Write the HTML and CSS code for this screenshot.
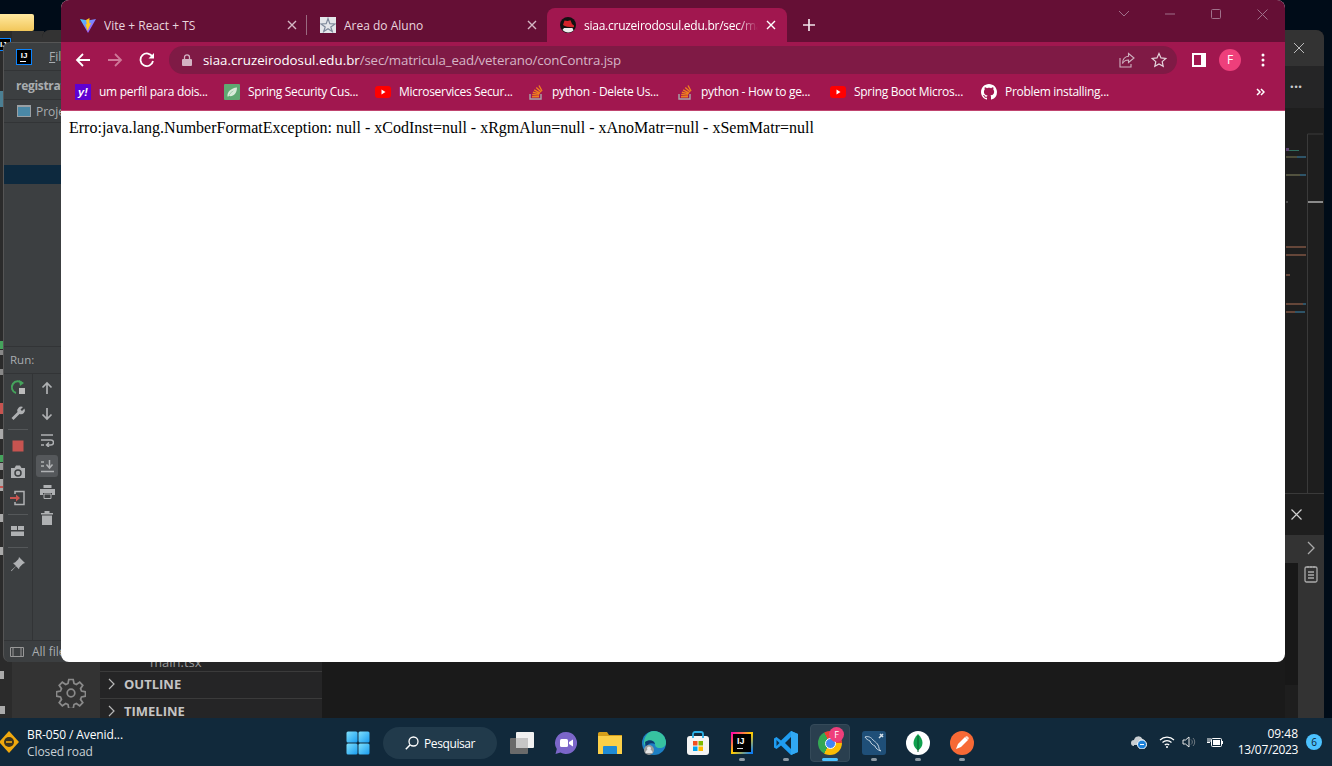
FILE: index.html
```html
<!DOCTYPE html>
<html lang="pt-BR">
<head>
<meta charset="utf-8">
<title>Desktop</title>
<link rel="stylesheet" href="styles.css">
</head>
<body>
<svg class="defs" width="0" height="0" aria-hidden="true">
  <symbol id="yt" viewBox="0 0 16 16"><rect x="0" y="2" width="16" height="12" rx="3" fill="#f00"/><path d="M6.500 5.500v5l4-2.500z" fill="#fff"/></symbol>
  <symbol id="so" viewBox="0 0 16 16"><path d="M2 10v5h11v-5" fill="none" stroke="#a8a8ab" stroke-width="1.400"/><path d="M4 12.700h7M4.200 10.500l6.800.6M4.900 8.200l6.600 1.700M6.200 5.800l5.900 3.300M8.300 3.400l4.900 4.700M11 1.500l3 5.500" fill="none" stroke="#f0801d" stroke-width="1.400"/></symbol>
</svg>
<div class="desktop">
  <div class="folder-tab"></div>

  <!-- back IntelliJ window -->
  <div class="win back-ij">
    <div class="ij-mini">IJ</div>
    <svg class="back-strip" width="5" height="666" viewBox="0 0 5 666">
      <rect y="40" width="3" height="16" fill="#4b7f93"/><rect y="290" width="3" height="8" fill="#45a35c"/><rect y="299" width="3" height="5" fill="#888"/><rect y="318" width="3" height="6" fill="#888"/><rect y="352" width="3" height="11" fill="#c75450"/><rect y="378" width="3" height="10" fill="#aaa"/><rect y="404" width="3" height="7" fill="#45a35c"/><rect y="412" width="3" height="7" fill="#999"/><rect y="428" width="3" height="12" fill="#aaa"/><rect y="435" width="3" height="2" fill="#c75450"/><rect y="463" width="3" height="8" fill="#aaa"/><rect y="496" width="3" height="8" fill="#aaa"/><rect y="620" width="4" height="8" fill="#aaa"/><rect y="655" width="5" height="8" fill="#aaa"/>
    </svg>
  </div>

  <!-- VS Code window -->
  <div class="win vscode">
    <div class="vs-title"><svg class="vs-x" width="12" height="12" viewBox="0 0 12 12"><path d="M1 1l10 10M11 1L1 11" stroke="#bbb" fill="none"/></svg></div>
    <div class="vs-main">
      <div class="vs-activity">
        <svg class="gear" width="30" height="30" viewBox="0 0 30 30" fill="none" stroke="#8a8a8a" stroke-width="1.700"><path d="M12.800 1.500h4.400l.8 4 2.300 1 3.400-2.300 3.100 3.100-2.300 3.400 1 2.300 4 .8v4.400l-4 .8-1 2.300 2.300 3.400-3.100 3.100-3.400-2.300-2.300 1-.8 4h-4.400l-.8-4-2.300-1-3.400 2.300-3.100-3.100 2.300-3.400-1-2.300-4-.8v-4.400l4-.8 1-2.300-2.300-3.400 3.100-3.100 3.400 2.300 2.300-1z"/><circle cx="15" cy="15" r="3.800"/></svg>
      </div>
      <div class="vs-side">
        <div class="vs-filler"></div>
        <div class="vs-file">main.tsx</div>
        <div class="vs-section"><svg width="8" height="12" viewBox="0 0 8 12"><path d="M1 1l5 5-5 5" fill="none" stroke="#b8b8b8" stroke-width="1.200"/></svg><span>OUTLINE</span></div>
        <div class="vs-section"><svg width="8" height="12" viewBox="0 0 8 12"><path d="M1 1l5 5-5 5" fill="none" stroke="#b8b8b8" stroke-width="1.200"/></svg><span>TIMELINE</span></div>
      </div>
      <div class="vs-editor">
        <div class="vs-tabs-right"><span class="vs-dots">•••</span></div>
        <div class="vs-code-right">
          <svg class="minimap" width="39" height="386" viewBox="0 0 39 386">
            <rect x="0" y="0" width="39" height="386" fill="#1e1e1e"/>
            <path d="M22.500 26V386" stroke="#3a3a3a"/><path d="M22.500 26H38" stroke="#3a3a3a"/>
            <rect x="23" y="93" width="15" height="2" fill="#8a8a8a"/>
            <rect x="1" y="40" width="3" height="3" fill="#5c4470"/><rect x="4" y="42" width="10" height="1" fill="#2f6e60"/>
            <rect x="1" y="48" width="11" height="2" fill="#4c4c38"/><rect x="12" y="48" width="9" height="2" fill="#2e5468"/>
            <rect x="1" y="66" width="14" height="2" fill="#52523f"/><rect x="15" y="66" width="6" height="2" fill="#2e5468"/>
            <rect x="1" y="93" width="2" height="2" fill="#4a4a4a"/>
            <rect x="1" y="138" width="20" height="2" fill="#654639"/><rect x="1" y="146" width="20" height="2" fill="#654639"/>
            <rect x="1" y="166" width="4" height="2" fill="#654639"/>
            <rect x="1" y="195" width="17" height="2" fill="#654639"/><rect x="18" y="195" width="3" height="2" fill="#2e5468"/>
            <rect x="1" y="203" width="9" height="2" fill="#654639"/><rect x="10" y="203" width="10" height="2" fill="#2e5468"/>
            <path d="M0 385.500H39" stroke="#3a3a3a"/>
          </svg>
        </div>
        <div class="vs-panel-head"><svg width="11" height="11" viewBox="0 0 11 11"><path d="M.5.500l10 10M10.500.500l-10 10" stroke="#d0d0d0" fill="none" stroke-width="1.200"/></svg></div>
        <div class="vs-panel">
          <div class="vs-panel-left"></div>
          <div class="vs-panel-rail">
            <svg width="8" height="14" viewBox="0 0 8 14"><path d="M1 1l6 6-6 6" fill="none" stroke="#aaa" stroke-width="1.300"/></svg>
            <svg width="14" height="18" viewBox="0 0 14 18" fill="none" stroke="#aaa" stroke-width="1.300"><rect x="1" y="2" width="12" height="15" rx="1.500"/><path d="M4 1v2M7 1v2M10 1v2M4 7h6M4 10h6M4 13h6"/></svg>
          </div>
        </div>
      </div>
    </div>
  </div>

  <!-- front IntelliJ window -->
  <div class="win ij">
    <div class="ij-menu">
      <div class="ij-logo"><span>IJ</span><i></i></div>
      <span class="ij-file"><u>F</u>il</span>
    </div>
    <div class="ij-proj">registrat</div>
    <div class="ij-tool"><span class="ij-box"></span><span>Proje</span></div>
    <div class="ij-tree"><div class="ij-sel"></div></div>
    <div class="ij-run-head"><span>Run:</span><span class="ij-box small"></span></div>
    <div class="ij-run">
      <div class="ij-col1">
        <svg width="16" height="16" viewBox="0 0 16 16"><path d="M12.500 4.500A6 6 0 1 0 6 14" fill="none" stroke="#45a35c" stroke-width="2"/><path d="M9 1l5 3-4 3z" fill="#45a35c"/><rect x="9" y="9" width="6" height="6" fill="#bbb"/></svg>
        <svg width="16" height="16" viewBox="0 0 16 16"><path d="M1.500 13l6-6A4 4 0 0 1 13 2l-2.500 2.500 1.500 1.500L14.500 3.500A4 4 0 0 1 9.500 9l-6 6z" fill="#afb1b3"/></svg>
        <b class="sep"></b>
        <svg class="small-ic" width="12" height="12" viewBox="0 0 12 12"><rect width="11" height="11" x=".5" y=".5" fill="#c75450"/></svg>
        <svg width="16" height="16" viewBox="0 0 16 16"><path d="M1 4h3.500L6 1.500h4L11.500 4H15v10H1z" fill="#afb1b3"/><circle cx="8" cy="9" r="3" fill="none" stroke="#3c3f41" stroke-width="1.500"/></svg>
        <svg width="16" height="16" viewBox="0 0 16 16"><path d="M5 4V1.500h9v13H5V12" fill="none" stroke="#afb1b3" stroke-width="1.500"/><path d="M0 7h6V4.500L10 8l-4 3.500V9H0z" fill="#c75450"/></svg>
        <b class="sep"></b>
        <svg class="small-ic" width="14" height="12" viewBox="0 0 14 12"><path d="M0 1h6v4H0zM7 1h6v4H7zM0 6.500h13V11H0z" fill="#afb1b3"/></svg>
        <b class="sep"></b>
        <svg width="16" height="16" viewBox="0 0 16 16"><path d="M9 1l6 6-2 .7-3.500 3.500-.5 2-3-3-4.500 5L1 14.500l5-4.500-3-3 2-.5L8.500 3z" fill="#afb1b3"/></svg>
      </div>
      <div class="ij-col2">
        <svg width="14" height="14" viewBox="0 0 14 14"><path d="M7 13V2M2.500 6.500L7 2l4.500 4.500" fill="none" stroke="#afb1b3" stroke-width="1.700"/></svg>
        <svg width="14" height="14" viewBox="0 0 14 14"><path d="M7 1v11M2.500 7.500L7 12l4.500-4.500" fill="none" stroke="#afb1b3" stroke-width="1.700"/></svg>
        <svg width="14" height="14" viewBox="0 0 14 14"><path d="M1 2h12M1 7h10a2 2 0 0 1 0 5H7M9 9.500L6.500 12 9 14M1 12h3" fill="none" stroke="#afb1b3" stroke-width="1.500"/></svg>
        <span class="ij-active"><svg width="14" height="14" viewBox="0 0 14 14"><path d="M1 3h3M1 7h3M1 12.500h13M9.500 1v7M6.500 5.500L9.500 9l3-3.500" fill="none" stroke="#afb1b3" stroke-width="1.500"/></svg></span>
        <svg width="15" height="14" viewBox="0 0 15 14"><path d="M3.500 0h8v3h-8zM0 4h15v6h-3V8H3v2H0z" fill="#afb1b3"/><path d="M4 9h7v4.500H4z" fill="none" stroke="#afb1b3"/></svg>
        <svg width="12" height="14" viewBox="0 0 12 14"><path d="M0 2h3.500V0h5v2H12v1.500H0zM1 4.500h10V14H1z" fill="#afb1b3"/></svg>
      </div>
    </div>
    <div class="ij-status"><svg width="14" height="10" viewBox="0 0 14 10"><path d="M.5.500h13v9H.5zM3 .5v9M11 .5v9" fill="none" stroke="#999"/></svg><span>All file</span></div>
  </div>

  <!-- Chrome window -->
  <div class="win chrome">
    <div class="ch-tabs">
      <div class="tab">
        <svg class="fav" viewBox="0 0 16 16"><defs><linearGradient id="vg" x1="0" y1="0" x2="1" y2="1"><stop offset="0" stop-color="#41d1ff"/><stop offset="1" stop-color="#bd34fe"/></linearGradient></defs><path d="M0 2l8 1.400L16 2 8 16z" fill="url(#vg)"/><path d="M9.500 1L6 3l.8 4-1.300.5L7.500 14l3.500-8-1.700.3z" fill="#ffc91f"/></svg>
        <span class="tab-title">Vite + React + TS</span>
        <svg class="tab-x" viewBox="0 0 10 10"><path d="M1 1l8 8M9 1L1 9" stroke="#d4b8c4" stroke-width="1.400" fill="none"/></svg>
        <i class="tab-sep"></i>
      </div>
      <div class="tab">
        <svg class="fav" viewBox="0 0 16 16"><rect width="16" height="16" fill="#e4e6ea"/><path d="M8 1.500l1.800 5.200 5.200.3-4.200 2.900 1.500 4.600L8 11.700l-4.300 2.800 1.500-4.600L1 7l5.200-.3z" fill="none" stroke="#7f8a9c" stroke-width="1.200"/></svg>
        <span class="tab-title">Area do Aluno</span>
        <svg class="tab-x" viewBox="0 0 10 10"><path d="M1 1l8 8M9 1L1 9" stroke="#d4b8c4" stroke-width="1.400" fill="none"/></svg>
      </div>
      <div class="tab active">
        <svg class="fav" viewBox="0 0 16 16"><circle cx="8" cy="8" r="8" fill="#111"/><path d="M2.500 13A8 8 0 0 0 13.500 13.500L12.500 11H4z" fill="#eee"/><path d="M3 8l1.500-4.500 3 .5 3-.8L12 7l2 1.500c.5 1.500-.5 2-2 1.800C9 10.200 5 9.500 3 8z" fill="#d3232a"/></svg>
        <span class="tab-title fade">siaa.cruzeirodosul.edu.br/sec/matricula_ead/veterano/conContra.jsp</span>
        <svg class="tab-x" viewBox="0 0 10 10"><path d="M1 1l8 8M9 1L1 9" stroke="#fff" stroke-width="1.400" fill="none"/></svg>
      </div>
      <svg class="tab-plus" width="12" height="12" viewBox="0 0 12 12"><path d="M6 0v12M0 6h12" stroke="#f1e3e9" stroke-width="1.700"/></svg>
      <div class="win-ctrls">
        <svg width="12" height="8" viewBox="0 0 12 8"><path d="M1 1l5 5 5-5" fill="none" stroke="#a0708a"/></svg>
        <svg width="10" height="2" viewBox="0 0 10 2"><path d="M0 1h10" stroke="#a0708a"/></svg>
        <svg width="10" height="10" viewBox="0 0 10 10"><rect x=".5" y=".5" width="9" height="9" rx="1" fill="none" stroke="#a0708a"/></svg>
        <svg width="11" height="11" viewBox="0 0 11 11"><path d="M.5.500l10 10M10.500.500l-10 10" fill="none" stroke="#a0708a"/></svg>
      </div>
    </div>

    <div class="ch-toolbar">
      <svg class="nav" width="16" height="16" viewBox="0 0 16 16"><path d="M15 8H2M8 2L2 8l6 6" fill="none" stroke="#fff" stroke-width="1.800"/></svg>
      <svg class="nav" width="16" height="16" viewBox="0 0 16 16"><path d="M1 8h13M8 2l6 6-6 6" fill="none" stroke="#cf7898" stroke-width="1.800"/></svg>
      <svg class="nav" width="16" height="16" viewBox="0 0 16 16"><path d="M13.500 5A6.300 6.300 0 1 0 14 9" fill="none" stroke="#fff" stroke-width="1.800"/><path d="M9.500 6.500H15V1z" fill="#fff"/></svg>
      <div class="omnibox">
        <svg class="lock" width="10" height="12" viewBox="0 0 10 12"><path d="M2.500 5V3.300a2.500 2.500 0 0 1 5 0V5" fill="none" stroke="#d3b3c3" stroke-width="1.300"/><rect y="5" width="10" height="7" rx="1" fill="#d3b3c3"/></svg>
        <span class="url"><b>siaa.cruzeirodosul.edu.br</b><span class="url-path">/sec/matricula_ead/veterano/conContra.jsp</span></span>
        <svg class="omni-i" width="16" height="16" viewBox="0 0 16 16"><path d="M9.500 1.500L15 6l-5.500 4.500V8C6 8 4.500 9.500 3.500 11.500 3.500 7.500 6 4.500 9.500 4.200zM1 6v9h11v-3" fill="none" stroke="#cfb2c0" stroke-width="1.100"/></svg>
        <svg class="omni-i" width="16" height="16" viewBox="0 0 16 16"><path d="M8 1.500l2 4.400 4.800.5-3.600 3.200 1 4.700L8 11.900l-4.200 2.400 1-4.700L1.200 6.400 6 5.900z" fill="none" stroke="#e6d5dd" stroke-width="1.200"/></svg>
      </div>
      <svg class="side-ic" width="14" height="14" viewBox="0 0 14 14"><path d="M0 0h14v14H0z" fill="#fff"/><rect x="2" y="2" width="7" height="10" fill="#a1174f"/></svg>
      <div class="avatar">F</div>
      <svg class="kebab" width="4" height="14" viewBox="0 0 4 14"><circle cx="2" cy="2" r="1.500" fill="#fff"/><circle cx="2" cy="7" r="1.500" fill="#fff"/><circle cx="2" cy="12" r="1.500" fill="#fff"/></svg>
    </div>

    <div class="ch-bookmarks">
      <div class="bm"><span class="bm-yahoo">y!</span><span>um perfil para dois...</span></div>
      <div class="bm"><svg class="fav" viewBox="0 0 16 16"><rect width="16" height="16" rx="1" fill="#5fa872"/><path d="M3.500 12.500C3 8 7 4 13 3.500 13 9 9.500 13 5 12c1-2.500 3-4.500 5-5.500-2.500.8-4.500 3-5.500 6z" fill="#d8ead9"/></svg><span>Spring Security Cus...</span></div>
      <div class="bm"><svg class="fav"><use href="#yt"/></svg><span>Microservices Secur...</span></div>
      <div class="bm"><svg class="fav"><use href="#so"/></svg><span>python - Delete Us...</span></div>
      <div class="bm"><svg class="fav"><use href="#so"/></svg><span>python - How to ge...</span></div>
      <div class="bm"><svg class="fav"><use href="#yt"/></svg><span>Spring Boot Micros...</span></div>
      <div class="bm"><svg class="fav" viewBox="0 0 16 16"><path fill="#fff" d="M8 0C3.580 0 0 3.580 0 8c0 3.540 2.290 6.530 5.470 7.590.4.070.55-.17.55-.38 0-.19-.01-.82-.01-1.490-2.010.37-2.530-.49-2.690-.94-.09-.23-.48-.94-.82-1.130-.28-.15-.68-.52-.01-.53.63-.01 1.080.58 1.230.82.720 1.210 1.870.870 2.330.660.070-.52.280-.87.510-1.070-1.780-.2-3.640-.89-3.640-3.950 0-.87.310-1.590.820-2.150-.08-.2-.36-1.020.080-2.120 0 0 .670-.21 2.200.820.640-.18 1.320-.27 2-.27.680 0 1.360.090 2 .270 1.530-1.040 2.200-.82 2.200-.82.440 1.100.160 1.920.080 2.120.510.560.820 1.270.820 2.150 0 3.070-1.870 3.750-3.650 3.950.290.250.540.730.540 1.480 0 1.070-.01 1.930-.01 2.200 0 .210.150.460.550.380A8.013 8.013 0 0 0 16 8c0-4.420-3.580-8-8-8z"/></svg><span>Problem installing...</span></div>
      <svg class="bm-more" width="9" height="8" viewBox="0 0 9 8"><path d="M1 1l3 3-3 3M5 1l3 3-3 3" fill="none" stroke="#fff" stroke-width="1.500"/></svg>
    </div>

    <div class="ch-page">Erro:java.lang.NumberFormatException: null - xCodInst=null - xRgmAlun=null - xAnoMatr=null - xSemMatr=null</div>
  </div>

  <!-- taskbar -->
  <div class="taskbar">
    <div class="tb-weather">
      <svg width="22" height="24" viewBox="0 0 22 24"><path d="M9 1l10 11-10 11L-1 12z" fill="#f0a90e"/><circle cx="9" cy="12" r="5" fill="#3a3320"/><path d="M6 12h6" stroke="#f0a90e" stroke-width="1.600"/></svg>
      <div class="tb-wtext"><span>BR-050 / Avenid...</span><span class="dim">Closed road</span></div>
    </div>
    <div class="tb-center">
      <div class="tb-item"><svg width="24" height="24" viewBox="0 0 24 24"><defs><linearGradient id="wg" x1="0" y1="0" x2="1" y2="1"><stop offset="0" stop-color="#7fe0fc"/><stop offset="1" stop-color="#1a9df0"/></linearGradient></defs><rect x="0.500" y="0.500" width="11" height="11" rx="1.500" fill="url(#wg)"/><rect x="12.500" y="0.500" width="11" height="11" rx="1.500" fill="url(#wg)"/><rect x="0.500" y="12.500" width="11" height="11" rx="1.500" fill="url(#wg)"/><rect x="12.500" y="12.500" width="11" height="11" rx="1.500" fill="url(#wg)"/></svg></div>
      <div class="tb-search"><svg width="14" height="14" viewBox="0 0 14 14"><circle cx="8.500" cy="5.500" r="4.500" fill="none" stroke="#fff" stroke-width="1.300"/><path d="M5.200 8.800L.8 13.200" stroke="#fff" stroke-width="1.500"/></svg><span>Pesquisar</span></div>
      <div class="tb-item"><svg width="24" height="22" viewBox="0 0 24 22"><rect x="6" y="0" width="18" height="16" rx="1" fill="#f1f1f1"/><rect x="0" y="6" width="18" height="16" rx="1" fill="#6a6a6a"/><rect x="6" y="6" width="12" height="10" fill="#c6c6c6"/></svg></div>
      <div class="tb-item"><svg width="24" height="24" viewBox="0 0 24 24"><path d="M12 1a11 11 0 1 1-5.500 20.500L1.500 23l1.300-5A11 11 0 0 1 12 1z" fill="#7b66c9"/><rect x="6" y="8" width="8" height="8" rx="1.500" fill="#fff"/><path d="M15 11l4-2.500v7L15 13z" fill="#fff"/></svg></div>
      <div class="tb-item"><svg width="24" height="22" viewBox="0 0 24 22"><path d="M0 1.500A1.500 1.500 0 0 1 1.500 0H9l2 3h13v3H0z" fill="#d69f1a"/><path d="M0 4h24v18H0z" fill="#fcd049"/><path d="M5 15a1 1 0 0 1 1-1h12a1 1 0 0 1 1 1v7H5z" fill="#1f8bd6"/></svg></div>
      <div class="tb-item edge"><svg width="24" height="24" viewBox="0 0 24 24"><circle cx="12" cy="12" r="12" fill="#1d7fc4"/><path d="M12 0a12 12 0 0 1 12 12c0 3-3 5-6 5-4 0-5-2-5-4 0-3-3-4-6-3-2 1-4 2-5 5C1 6 6 0 12 0z" fill="#37c2a0"/><path d="M3 11c4-3 9-2 10 2-4-2-8 0-9 4z" fill="#0d3a6e"/><circle cx="7" cy="19" r="5" fill="#9a9a9a"/><circle cx="7" cy="17.500" r="2" fill="#e5e5e5"/><path d="M3.500 22a3.500 3.500 0 0 1 7 0z" fill="#e5e5e5"/></svg></div>
      <div class="tb-item"><svg width="24" height="24" viewBox="0 0 24 24"><rect x="1" y="5" width="22" height="19" rx="3" fill="#f4f4f4"/><path d="M7 7V3a2 2 0 0 1 2-2h6a2 2 0 0 1 2 2v4" fill="none" stroke="#2ab1e8" stroke-width="1.800"/><rect x="7" y="10" width="4.500" height="4.500" fill="#f25022"/><rect x="12.500" y="10" width="4.500" height="4.500" fill="#7fba00"/><rect x="7" y="15.500" width="4.500" height="4.500" fill="#00a4ef"/><rect x="12.500" y="15.500" width="4.500" height="4.500" fill="#ffb900"/></svg></div>
      <div class="tb-item on"><div class="tb-ij"><span>IJ</span><i></i></div></div>
      <div class="tb-item on"><svg width="24" height="24" viewBox="0 0 24 24"><path d="M17 0l7 3v18l-7 3L7 14.500 2.500 18 0 16.500V7.500L2.500 6 7 9.500z" fill="#1f9cf0"/><path d="M2.500 9v6L5.500 12z" fill="#0d3350"/><path d="M17 0l7 3v18l-7 3z" fill="#31a8f3"/><path d="M17 6l-6 6 6 6z" fill="#12293a"/></svg></div>
      <div class="tb-item active">
        <div class="chrome-ic"><span class="chrome-in"></span></div>
        <span class="chrome-badge">F</span>
      </div>
      <div class="tb-item on"><svg width="24" height="24" viewBox="0 0 24 24"><rect width="24" height="24" rx="3" fill="#1f4f78"/><path d="M3 6c3-1 6 0 8 3 2 2 5 3 6 8 0 1 1 2 2 3-3-1-5-2-6-5-2-1-4-2-5-5C6 9 4 8 3 6z" fill="none" stroke="#c7d6e2"/><path d="M17 7l4-4M18 3l3 3" stroke="#d8e2ea" stroke-width="1.500"/></svg></div>
      <div class="tb-item on"><svg width="24" height="24" viewBox="0 0 24 24"><circle cx="12" cy="12" r="12" fill="#fff"/><path d="M12 3c3 3 4.500 6 4.500 9s-2 5.500-4.500 7.500c-2.500-2-4.500-4.500-4.500-7.500S9 6 12 3z" fill="#10a14e"/><path d="M12 5v16" stroke="#0a5d2f"/></svg></div>
      <div class="tb-item on"><svg width="24" height="24" viewBox="0 0 24 24"><circle cx="12" cy="12" r="12" fill="#f76935"/><path d="M6 18l2-5 7-7 3 3-7 7z" fill="#fff"/><path d="M15 6l2-1 2 2-1 2z" fill="#fde0d3"/></svg></div>
    </div>
    <div class="tb-tray">
      <svg class="tray-cloud" width="16" height="14" viewBox="0 0 16 14"><path d="M3 11a3 3 0 0 1 0-6 4.500 4.500 0 0 1 8.500-1A3 3 0 0 1 14 7v3H3z" fill="#c9ced2"/><circle cx="11" cy="9.500" r="4.500" fill="#1a80d9" stroke="#fff"/><path d="M9 9.500h4" stroke="#fff"/></svg>
      <svg class="tray-wifi" width="16" height="12" viewBox="0 0 16 12"><path d="M1 4a10 10 0 0 1 14 0M3.500 6.500a6.500 6.500 0 0 1 9 0M5.800 9a3 3 0 0 1 4.400 0" fill="none" stroke="#fff" stroke-width="1.200"/><circle cx="8" cy="11" r="1" fill="#fff"/></svg>
      <svg class="tray-vol" width="16" height="14" viewBox="0 0 16 14"><path d="M1 5h2.500L7 2v10L3.500 9H1z" fill="none" stroke="#e8e8e8"/><path d="M9 4.500a3 3 0 0 1 0 5M11 3a5.500 5.500 0 0 1 0 8" fill="none" stroke="#6e7880"/></svg>
      <svg class="tray-bat" width="16" height="12" viewBox="0 0 16 12"><path d="M0 6.500h3M1 2v4M3 2v4" stroke="#fff"/><rect x="4.500" y="2.500" width="10" height="8" rx="1" fill="none" stroke="#fff"/><rect x="6" y="4" width="7" height="5" fill="#fff"/><path d="M15.500 5v3" stroke="#fff"/></svg>
      <div class="tb-clock"><span>09:48</span><span class="tb-date">13/07/2023</span></div>
      <span class="tb-badge">6</span>
    </div>
  </div>
</div>
</body>
</html>
```

FILE: styles.css
```css
* { box-sizing: border-box; }
html, body { margin: 0; padding: 0; width: 1332px; height: 766px; overflow: hidden; }
body { font-family: "Open Sans", "Noto Sans", sans-serif; }
.defs { display: block; height: 0; }
.desktop { position: relative; width: 1332px; height: 766px; background: #000c18; overflow: hidden; }
.win { position: absolute; }

.folder-tab { position: absolute; left: -4px; top: 14px; width: 38px; height: 17px; background: linear-gradient(#ffe9a0, #f2c75a); border-radius: 2px; }

/* back IJ */
.back-ij { left: 0; top: 31px; width: 44px; height: 687px; background: linear-gradient(90deg, #2b2b2b 0 12px, #333 12px); }
.ij-mini { width: 11px; height: 13px; margin-top: 7px; background: #000; border: 1px solid #0a84ff; border-left: 0; color: #fff; font: bold 8px/11px "Liberation Sans", sans-serif; overflow: hidden; }
.back-strip { display: block; }

/* VS Code */
.vscode { left: 42px; top: 30px; width: 1282px; height: 688px; background: #1e1e1e; border-radius: 8px 8px 0 0; display: flex; flex-direction: column; overflow: hidden; }
.vs-title { height: 36px; flex: none; background: #333; display: flex; justify-content: flex-end; align-items: center; padding-right: 19px; }
.vs-main { flex: 1; display: flex; min-height: 0; }
.vs-activity { width: 58px; flex: none; background: #333; display: flex; flex-direction: column; justify-content: flex-end; align-items: center; padding-bottom: 10px; }
.vs-side { width: 222px; flex: none; background: #252526; display: flex; flex-direction: column; margin-bottom: -6px; }
.vs-filler { flex: 1; }
.vs-file { height: 10px; padding-left: 50px; color: #9a9a9a; font-size: 13px; line-height: 2px; }
.vs-section { height: 26.500px; border-top: 1px solid #3b3b3b; display: flex; align-items: center; gap: 8px; padding: 0 0 1px 8px; color: #c4c4c4; font: bold 13px "Open Sans", sans-serif; }
.vs-editor { flex: 1; display: flex; flex-direction: column; align-items: flex-end; background: #1a1a1a; min-width: 0; }
.vs-tabs-right { width: 39px; height: 42px; flex: none; background: #252526; display: flex; align-items: center; justify-content: center; padding-right: 16px; }
.vs-dots { color: #ccc; font: 9px/1 "Liberation Sans", sans-serif; letter-spacing: 1px; white-space: nowrap; }
.vs-code-right { width: 39px; height: 386px; flex: none; }
.minimap { display: block; }
.vs-panel-head { width: 39px; height: 41px; flex: none; background: #1e1e1e; display: flex; align-items: center; padding-left: 6px; }
.vs-panel { width: 39px; flex: 1; display: flex; }
.vs-panel-left { width: 13px; background: linear-gradient(#333 0 28px, #181818 28px 150px, #1e1e1e 150px); }
.vs-panel-rail { width: 26px; background: #333; display: flex; flex-direction: column; align-items: center; gap: 10px; padding-top: 6px; }

/* IJ front */
.ij { left: 3px; top: 42px; width: 90px; height: 620px; background: #3c3f41; border: 1px solid #555; border-width: 1px 0 0 1px; border-radius: 7px 0 0 7px; display: flex; flex-direction: column; overflow: hidden; color: #a9adb0; font-family: "Open Sans", sans-serif; }
.ij-menu { height: 28px; flex: none; display: flex; align-items: center; gap: 17px; padding-left: 12px; border-bottom: 1px solid #323436; }
.ij-logo { width: 16px; height: 16px; background: #000; border: 1px solid #0a84ff; color: #fff; font: bold 8px/9px "Liberation Sans", sans-serif; text-align: center; position: relative; padding-top: 1px; }
.ij-logo i { position: absolute; left: 3px; bottom: 2px; width: 6px; height: 1px; background: #fff; }
.ij-file { font-size: 12px; }
.ij-proj { height: 29px; flex: none; display: flex; align-items: center; padding-left: 12px; font-weight: 700; font-size: 12px; letter-spacing: -.3px; border-bottom: 1px solid #323436; }
.ij-tool { height: 23px; flex: none; display: flex; align-items: center; gap: 5px; padding-left: 13px; font-size: 12px; border-bottom: 1px solid #323436; }
.ij-box { display: inline-block; width: 14px; height: 12px; background: #4a88a6; border: 1px solid #9aa0a4; border-top-width: 2px; flex: none; }
.ij-box.small { width: 14px; }
.ij-tree { height: 224px; flex: none; padding-top: 42px; background: #3c3f41; border-bottom: 1px solid #323436; }
.ij-sel { height: 19px; background: #0d293e; }
.ij-run-head { height: 27px; flex: none; display: flex; align-items: center; gap: 27px; padding: 0 0 2px 6px; font-size: 11.500px; border-bottom: 1px solid #323436; }
.ij-run { height: 266px; flex: none; display: flex; }
.ij-col1 { width: 29px; flex: none; border-right: 1px solid #323436; display: flex; flex-direction: column; align-items: center; }
.ij-col1 svg { flex: none; margin: 5px 0; }
.ij-col1 .small-ic { margin: 7px 0; }
.sep { display: block; width: 20px; height: 1px; background: #55585a; margin: 3px 0; flex: none; }
.ij-col2 { width: 28px; flex: none; display: flex; flex-direction: column; align-items: center; padding-top: 1px; }
.ij-col2 > svg { flex: none; margin: 6px 0; }
.ij-active { width: 22px; height: 22px; margin: 2px 0; background: #55585b; border-radius: 3px; display: flex; align-items: center; justify-content: center; flex: none; }
.ij-status { flex: 1; display: flex; align-items: center; gap: 8px; padding-left: 6px; font-size: 12px; border-top: 1px solid #323436; }

/* Chrome */
.chrome { left: 61px; top: 0; width: 1224px; height: 662px; display: flex; flex-direction: column; background: #fff; border-radius: 8px; overflow: hidden; }
.ch-tabs { height: 42px; flex: none; background: #650f35; display: flex; align-items: flex-end; padding-left: 6px; }
.tab { position: relative; width: 240px; height: 34px; flex: none; display: flex; align-items: center; gap: 8px; padding: 0 9px 0 13px; color: #e9d5de; font-size: 12px; }
.tab.active { background: #a1174f; border-radius: 8px 8px 0 0; color: #fff; padding-right: 10px; }
.fav { width: 16px; height: 16px; flex: none; }
.tab-title { flex: 1; min-width: 0; white-space: nowrap; overflow: hidden; }
.tab-title.fade { letter-spacing: -.25px; -webkit-mask-image: linear-gradient(90deg, #000 88%, transparent); mask-image: linear-gradient(90deg, #000 88%, transparent); }
.tab-x { width: 10px; height: 10px; flex: none; margin-right: 1px; }
.tab-sep { position: absolute; right: 0; top: 7px; width: 1px; height: 20px; background: #9a6a80; }
.tab-plus { flex: none; margin: 0 0 11px 16px; }
.win-ctrls { margin-left: auto; align-self: flex-start; width: 184px; height: 28px; display: grid; grid-template-columns: repeat(4, 46px); align-items: center; justify-items: center; }

.ch-toolbar { height: 34px; flex: none; background: #a1174f; display: flex; align-items: center; padding: 2px 20px 0 14px; }
.nav { flex: none; margin-right: 16px; }
.omnibox { width: 1008px; height: 28px; margin-left: -2px; background: #7f1a45; border-radius: 14px; display: flex; align-items: center; padding: 0 10px 0 13px; flex: none; }
.lock { flex: none; margin-right: 11px; }
.url { flex: 1; font-size: 13.300px; color: #d6b5c5; white-space: nowrap; }
.url b { font-weight: 400; color: #fff; }
.url-path { letter-spacing: -.17px; }
.omni-i { flex: none; margin-left: 16px; }
.side-ic { flex: none; margin-left: 15px; }
.avatar { width: 22px; height: 22px; flex: none; margin-left: 13px; border-radius: 50%; background: #ee3f7b; color: #fff; font-size: 12px; line-height: 22px; text-align: center; }
.kebab { flex: none; margin-left: 20px; }

.ch-bookmarks { height: 35px; flex: none; background: #a1174f; border-bottom: 1px solid #c0446f; display: flex; align-items: center; padding: 0 20px 2px 14px; color: #fff; font-size: 12px; letter-spacing: -.3px; }
.bm { display: flex; align-items: center; gap: 8px; width: 151px; flex: none; white-space: nowrap; }
.bm > span:last-child { margin-bottom: 2px; }
.bm:nth-child(1) { width: 149px; }
.bm:nth-child(3) { width: 153px; }
.bm:nth-child(4) { width: 149px; }
.bm:nth-child(5) { width: 153px; }
.bm:nth-child(6) { width: 151px; }
.bm:nth-child(7) { flex: 1; width: auto; }
.bm-yahoo { width: 16px; height: 16px; flex: none; background: #5f01d1; color: #fff; font: italic bold 11px/16px "Liberation Sans", sans-serif; text-align: center; letter-spacing: 0; }
.bm-more { flex: none; }

.ch-page { flex: 1; padding: 8px; color: #000; font: 16px/18px "Liberation Serif", serif; white-space: nowrap; }

/* Taskbar */
.taskbar { position: absolute; left: 0; right: 0; bottom: 0; height: 48px; background: #11293b; display: flex; align-items: center; color: #fff; font-size: 12px; }
.tb-weather { width: 340px; flex: none; display: flex; align-items: center; gap: 5px; }
.tb-wtext { display: flex; flex-direction: column; line-height: 17px; padding-top: 1px; letter-spacing: -.1px; }
.dim { color: #c9d0d5; }
.tb-center { position: absolute; left: 336px; top: 0; height: 48px; display: flex; align-items: center; }
.tb-item { position: relative; width: 44px; height: 48px; flex: none; display: flex; align-items: center; justify-content: center; padding-top: 2px; }
.tb-item.on::after { content: ""; position: absolute; left: 19px; bottom: 5px; width: 6px; height: 3px; border-radius: 2px; background: #8d99a3; }
.tb-item.active::before { content: ""; position: absolute; left: 2px; right: 2px; top: 6px; bottom: 4px; background: #2a3f4f; border-radius: 4px; border: 1px solid #354a59; }
.tb-item.active::after { content: ""; position: absolute; left: 14px; bottom: 5px; width: 16px; height: 3px; border-radius: 2px; background: #4cc2ff; }
.tb-search { width: 114px; height: 32px; flex: none; margin: 2px 3px 0 3px; background: #213a4b; border-radius: 16px; display: flex; align-items: center; gap: 5px; padding-left: 22px; font-size: 12px; letter-spacing: -.4px; }
.tb-ij { width: 22px; height: 22px; background: #000; border: 2px solid; border-image: linear-gradient(135deg, #f0a, #fc0 50%, #07f) 1; color: #fff; font: bold 9px/10px "Liberation Sans", sans-serif; padding: 2px 0 0 4px; position: relative; }
.tb-ij i { position: absolute; left: 4px; bottom: 3px; width: 6px; height: 1.500px; background: #ddd; }
.chrome-ic { position: relative; width: 24px; height: 24px; border-radius: 50%; background: conic-gradient(from -30deg, #ea4335 0 120deg, #fbbc04 120deg 240deg, #34a853 240deg 360deg); display: flex; align-items: center; justify-content: center; }
.chrome-in { width: 11px; height: 11px; border-radius: 50%; background: #4285f4; border: 1.500px solid #fff; }
.chrome-badge { position: absolute; left: 21px; top: 9px; width: 15px; height: 15px; border-radius: 50%; background: #ee3f7b; color: #fff; font-size: 9px; line-height: 15px; text-align: center; }
.tb-tray { margin-left: auto; display: flex; align-items: center; }
.tb-tray > svg { flex: none; }
.tray-cloud { margin-right: 12px; }
.tray-wifi { margin-right: 7px; }
.tray-vol { margin-right: 9px; }
.tray-bat { margin-right: 15px; }
.tb-clock { display: flex; flex-direction: column; align-items: flex-end; line-height: 16px; margin-right: 8px; }
.tb-date { letter-spacing: -.35px; }
.tb-badge { width: 16px; height: 16px; margin-right: 10px; border-radius: 50%; background: #4cc2ff; color: #0b2233; font-size: 10px; line-height: 16px; text-align: center; }
```
